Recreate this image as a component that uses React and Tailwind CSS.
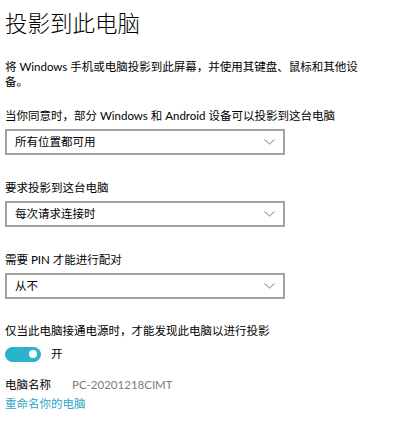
import React from "react";

const FONT = { fontFamily: 'Lato, "Noto Sans CJK SC", sans-serif' };

function Chevron() {
  return (
    <svg width="11" height="6" viewBox="0 0 11 6" className="shrink-0">
      <path d="M0.5 0.5 L5.5 5 L10.5 0.5" fill="none" stroke="#7a7a7a" strokeWidth="1" />
    </svg>
  );
}

function Select({ value }) {
  return (
    <div className="mt-[5px] flex h-[26px] w-[280px] items-center justify-between border-2 border-[#a3a3a3] bg-white pl-[8px] pr-[8px]">
      <span className="text-[11.5px] leading-[16px] text-black">{value}</span>
      <Chevron />
    </div>
  );
}

function Field({ label, value, first }) {
  return (
    <div className={first ? "mt-[19px]" : "mt-[25px]"}>
      <div className="text-[11.5px] leading-[16px] text-black">{label}</div>
      <Select value={value} />
    </div>
  );
}

export default function App() {
  return (
    <div className="min-h-[426px] w-[419px] bg-white pl-[5px] pt-[8px]" style={FONT}>
      <h1 className="text-[22.5px] font-light leading-[32px] text-black">投影到此电脑</h1>
      <p className="mt-[19px] w-[364px] text-[11.5px] leading-[15px] text-black">
        将 Windows 手机或电脑投影到此屏幕，并使用其键盘、鼠标和其他设备。
      </p>
      <Field first label="当你同意时，部分 Windows 和 Android 设备可以投影到这台电脑" value="所有位置都可用" />
      <Field label="要求投影到这台电脑" value="每次请求连接时" />
      <Field label="需要 PIN 才能进行配对" value="从不" />
      <div className="mt-[24px] text-[11.5px] leading-[16px] text-black">
        仅当此电脑接通电源时，才能发现此电脑以进行投影
      </div>
      <div className="mt-[5px] flex h-[20px] items-center gap-[10px]">
        <div className="flex h-[15px] w-[36px] items-center justify-end rounded-full bg-[#2bb3c9] pr-[4px]">
          <div className="h-[8px] w-[8px] rounded-full bg-white" />
        </div>
        <span className="text-[11.5px] leading-[16px] text-black">开</span>
      </div>
      <div className="mt-[12px] flex text-[11.5px] leading-[18px]">
        <span className="w-[67px] text-black">电脑名称</span>
        <span className="text-[#7d7d7d]">PC-20201218CIMT</span>
      </div>
      <div className="mt-[1px] text-[11.5px] leading-[18px] text-[#2aa6c7]">重命名你的电脑</div>
    </div>
  );
}
